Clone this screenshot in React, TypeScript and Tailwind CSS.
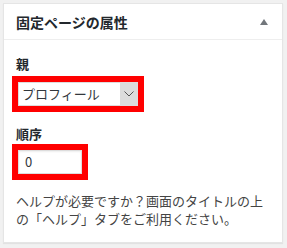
import React from "react";

export default function App() {
  return (
    <div
      className="w-[287px] h-[248px] bg-[#f1f1f1] pt-[3px] pl-[3px]"
      style={{ fontFamily: '"Noto Sans CJK JP", "Noto Sans", sans-serif' }}
    >
      <div className="w-[280px] h-[240px] bg-white border border-[#e5e5e5] shadow-[0_1px_1px_rgba(0,0,0,0.06)] flex flex-col">
        <div className="h-[36px] border-b border-[#eeeeee] flex items-center justify-between pl-[12px] pr-[14px]">
          <span className="text-[14px] font-bold leading-[20px] text-[#23282d]">固定ページの属性</span>
          <span className="w-0 h-0 border-l-[4px] border-r-[4px] border-b-[6px] border-l-transparent border-r-transparent border-b-[#72777c]" />
        </div>
        <div className="flex flex-col px-[12px] pt-[14px]">
          <div className="text-[13px] font-bold leading-[20px] text-[#23282d]">親</div>
          <div className="-ml-[4px] mt-[2px] w-[132px] h-[36px] border-[6px] border-[#ff0000]">
            <div className="w-full h-full bg-white border border-[#dddddd] flex items-center justify-between pl-[3px] pr-0">
              <span className="text-[13px] leading-[20px] text-[#32373c]">プロフィール</span>
              <span className="w-[17px] h-[22px] bg-[#dcdcdc] flex items-center justify-center">
                <svg width="10" height="6" viewBox="0 0 10 6">
                  <polyline points="0.5,0.5 5,5 9.5,0.5" fill="none" stroke="#555" strokeWidth="1" />
                </svg>
              </span>
            </div>
          </div>
          <div className="mt-[12px] text-[13px] font-bold leading-[20px] text-[#23282d]">順序</div>
          <div className="-ml-[4px] w-[76px] h-[36px] border-[6px] border-[#ff0000]">
            <div className="w-full h-full bg-white border border-[#dddddd] shadow-[inset_0_1px_2px_rgba(0,0,0,0.07)] flex items-center pl-[6px]">
              <span className="text-[13px] leading-[20px] text-[#32373c]">0</span>
            </div>
          </div>
          <div className="mt-[12px] text-[13px] leading-[18px] text-[#444444] whitespace-nowrap">
            <div>ヘルプが必要ですか？画面のタイトルの上</div>
            <div>の「ヘルプ」タブをご利用ください。</div>
          </div>
        </div>
      </div>
    </div>
  );
}
